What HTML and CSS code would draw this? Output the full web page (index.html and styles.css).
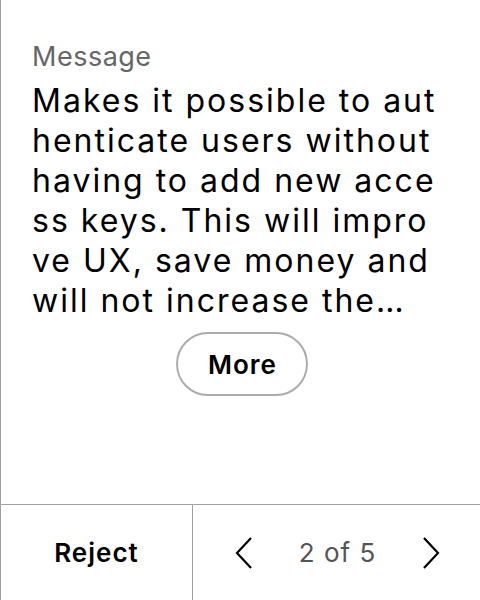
FILE: index.html
```html
<!DOCTYPE html>
<html>
<head>
<meta charset="utf-8">
<link rel="stylesheet" href="styles.css">
</head>
<body>
<div class="screen">
  <div class="content">
    <div class="label">Message</div>
    <div class="message">Makes it possible to authenticate users without having to add new access keys. This will improve UX, save money and will not increase the…</div>
    <div class="more-row"><button class="more">More</button></div>
  </div>
  <div class="footer">
    <div class="reject">Reject</div>
    <div class="pager">
      <svg class="chev" width="18" height="32" viewBox="0 0 18 32"><path d="M16 1 L2 16 L16 31" fill="none" stroke="#000" stroke-width="2.2"/></svg>
      <span class="count">2 of 5</span>
      <svg class="chev" width="18" height="32" viewBox="0 0 18 32"><path d="M2 1 L16 16 L2 31" fill="none" stroke="#000" stroke-width="2.2"/></svg>
    </div>
  </div>
</div>
</body>
</html>
```
FILE: styles.css
```css
html, body { margin: 0; padding: 0; background: #fff; }
body { font-family: Inter, "Noto Sans", sans-serif; color: #000; }
.screen {
  width: 480px; height: 600px; box-sizing: border-box;
  border-left: 1px solid #a0a0a0;
  display: flex; flex-direction: column;
}
.content { flex: 1; padding: 41px 33px 0 31px; }
.label { font-size: 27px; line-height: 32px; color: #666; letter-spacing: 0.5px; }
.message {
  margin-top: 8px;
  font-size: 32px; line-height: 40px; font-weight: 400; word-break: break-all; letter-spacing: 2px;
  height: 240px; overflow: hidden;
}
.more-row { display: flex; justify-content: center; margin-top: 11px; padding-left: 5px; }
.more {
  font-family: inherit; font-size: 26px; font-weight: 600; color: #000; letter-spacing: 1px;
  background: #fff; border: 2px solid #acacac; border-radius: 32px;
  width: 132px; height: 64px; padding: 0 0 0 1px;
}
.footer { height: 96px; border-top: 1px solid #a0a0a0; display: flex; box-sizing: border-box; }
.reject {
  width: 192px; box-sizing: border-box; border-right: 1px solid #a0a0a0;
  display: flex; align-items: center; justify-content: center;
  font-size: 26px; font-weight: 600; letter-spacing: 1px;
}
.pager { flex: 1; display: flex; align-items: center; justify-content: space-between; padding: 0 40px 0 42px; }
.count { font-size: 26px; color: #555; letter-spacing: 1px; }
```
